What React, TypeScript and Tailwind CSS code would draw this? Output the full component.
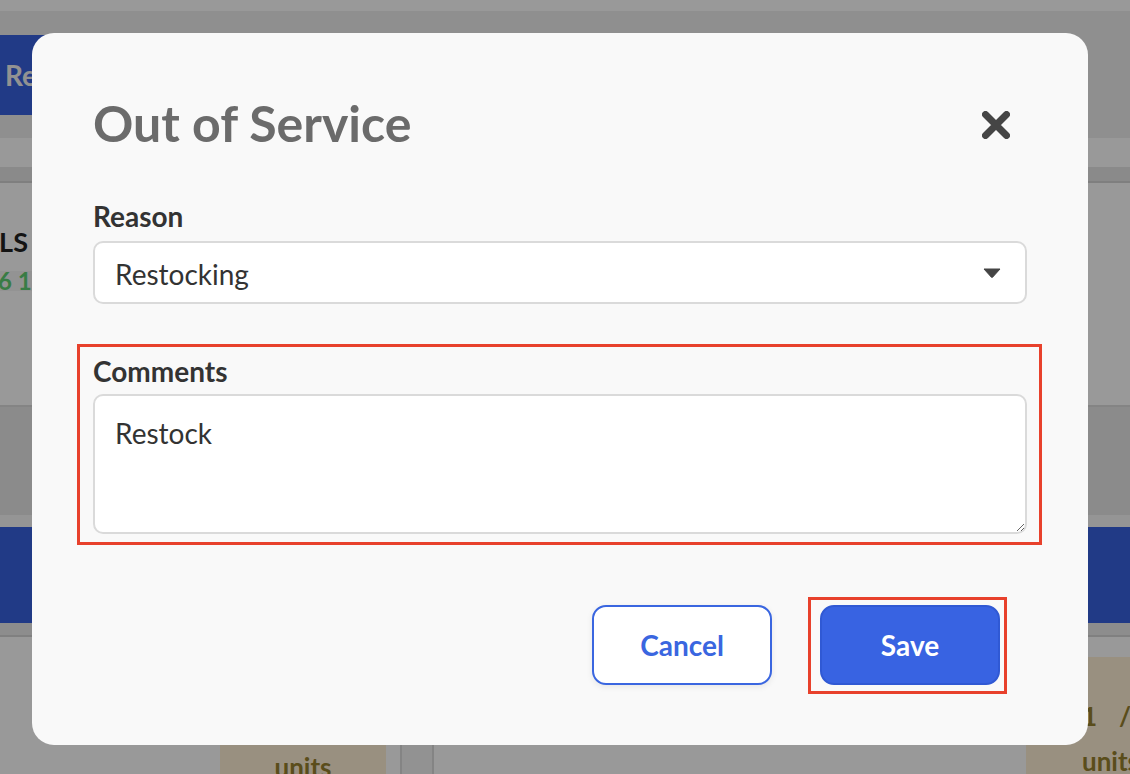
import React from "react";

const font = { fontFamily: "Lato, 'Open Sans', sans-serif" };

function CloseIcon() {
  return (
    <svg width="28" height="28" viewBox="0 0 28 28" aria-hidden="true">
      <path d="M3.5 3.5 L24.5 24.5 M24.5 3.5 L3.5 24.5" stroke="#454545" strokeWidth="7" strokeLinecap="round" fill="none" />
    </svg>
  );
}

function Caret() {
  return (
    <svg width="18" height="10" viewBox="0 0 18 10" aria-hidden="true">
      <path d="M1 1 L17 1 L9.6 9.2 Q9 9.8 8.4 9.2 Z" fill="#444444" stroke="#444444" strokeWidth="1" strokeLinejoin="round" />
    </svg>
  );
}

function PageBehind() {
  return (
    <div className="flex h-full w-full flex-col bg-white">
      <div className="h-[11px] shrink-0 bg-white" />
      <div className="flex h-[127px] shrink-0 items-start bg-[#eeeeee]">
        <div className="ml-[-40px] mt-[24px] flex h-[80px] w-[200px] items-center rounded-[10px] bg-[#3762e0] pl-[45px] text-[28px] font-bold text-[#f4f4f4]">
          Return
        </div>
      </div>
      <div className="h-[29px] shrink-0 bg-white" />
      <div className="h-[16px] shrink-0 border-b-2 border-[#d4d4d4] bg-[#e6e6e6]" />
      <div className="flex h-[222px] shrink-0 flex-col bg-white">
        <div className="ml-[-78px] mt-[44px] whitespace-nowrap text-[27px] font-bold leading-[30px] text-[#222]">
          DETAILS
        </div>
        <div className="mt-[14px] flex h-[20px] w-[60px] items-center bg-[#f6f6f6]">
          <span className="ml-[-16px] whitespace-nowrap text-[24px] font-bold text-[#5fcf73]">16 12</span>
        </div>
      </div>
      <div className="h-[110px] shrink-0 border-t-2 border-[#dddddd] bg-[#e8e8e8]" />
      <div className="h-[12px] shrink-0 bg-[#f8f8f8]" />
      <div className="h-[96px] shrink-0 bg-[#3762e0]" />
      <div className="h-[14px] shrink-0 border-b-2 border-[#d6d6d6] bg-[#ececec]" />
      <div className="flex flex-1 bg-white">
        <div className="w-[220px]" />
        <div className="flex w-[166px] flex-col items-center justify-end bg-[#fff0d6]">
          <span className="mb-[-6px] text-[26px] font-bold text-[#97802e]">units</span>
        </div>
        <div className="w-[14px]" />
        <div className="w-[34px] border-x-2 border-[#dcdcdc] bg-[#f4f4f4]" />
        <div className="flex flex-1 flex-col justify-end">
          <span className="mb-[30px] ml-[24px] text-[26px] font-bold text-[#111]">pallet to loading</span>
        </div>
        <div className="mt-[20px] flex w-[104px] flex-col items-start bg-[#fff0d6] pl-[56px]">
          <div className="mt-[40px] flex gap-[22px] whitespace-nowrap text-[26px] font-bold text-[#97802e]">
            <span>1</span>
            <span>/</span>
          </div>
          <span className="mt-[6px] text-[26px] font-bold text-[#97802e]">units</span>
        </div>
      </div>
    </div>
  );
}

export default function App() {
  return (
    <div className="relative h-[774px] w-[1130px] overflow-hidden" style={font}>
      <PageBehind />
      <div className="absolute inset-0 bg-black/40" />
      <div className="absolute left-[32px] top-[33px] flex h-[712px] w-[1056px] flex-col rounded-[22px] bg-[#f9f9f9] px-[61px] pt-[65px]">
        <div className="flex items-start justify-between">
          <h2 className="text-[50px] font-bold leading-[50px] text-[#6b6b6b]">Out of Service</h2>
          <button className="mr-[17px] mt-[13px] flex h-[28px] w-[28px] items-center justify-center">
            <CloseIcon />
          </button>
        </div>

        <label className="mt-[54px] block text-[28px] font-bold leading-[28px] text-[#333333]">Reason</label>
        <div className="mt-[11px] flex h-[63px] items-center justify-between rounded-[10px] border-2 border-[#dadada] bg-white pl-[20px] pr-[24px]">
          <span className="pt-[2px] text-[28px] text-[#333333]">Restocking</span>
          <Caret />
        </div>

        <div className="-ml-[16px] -mr-[15px] mt-[40px] border-[3px] border-[#e8412c] pb-[8px] pl-[13px] pr-[12px] pt-[10px]">
          <label className="block text-[28px] font-bold leading-[28px] text-[#333333]">Comments</label>
          <textarea
            defaultValue="Restock"
            className="mt-[9px] block h-[140px] w-full rounded-[10px] border-2 border-[#dadada] bg-white px-[20px] pt-[18px] text-[28px] leading-[39px] text-[#333333] outline-none"
            style={font}
          />
        </div>

        <div className="mr-[20px] mt-[52px] flex items-start justify-end gap-[36px]">
          <button className="mt-[8px] h-[80px] w-[180px] rounded-[14px] border-2 border-[#3a66e0] bg-white text-[28px] font-bold text-[#3a66e0] shadow-[0_2px_6px_rgba(0,0,0,0.08)]">
            Cancel
          </button>
          <div className="border-[3px] border-[#e8412c] pb-[6px] pl-[9px] pr-[4px] pt-[5px]">
            <button className="h-[80px] w-[180px] rounded-[14px] border-2 border-[#3059d4] bg-[#3863e2] text-[28px] font-bold text-white">
              Save
            </button>
          </div>
        </div>
      </div>
    </div>
  );
}
